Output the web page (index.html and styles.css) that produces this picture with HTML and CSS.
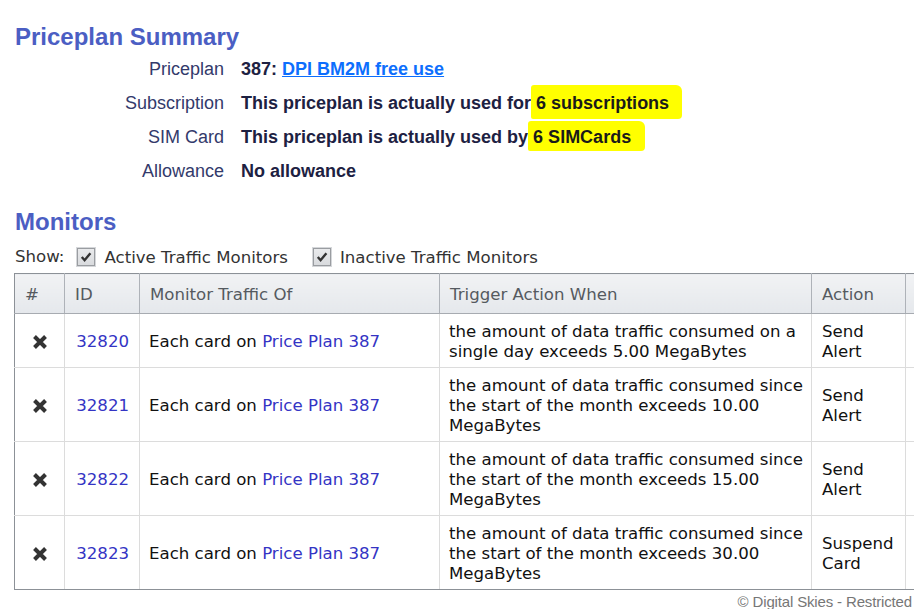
FILE: index.html
```html
<!DOCTYPE html>
<html>
<head>
<meta charset="utf-8">
<link rel="stylesheet" href="styles.css">
</head>
<body>
<div class="page">
  <h1 class="heading">Priceplan Summary</h1>
  <div class="summary">
    <div class="label">Priceplan</div>
    <div class="value">387: <a class="plan-link" href="#">DPI BM2M free use</a></div>
    <div class="label">Subscription</div>
    <div class="value">This priceplan is actually used for<span class="mark mark-sub"> 6 subscriptions</span></div>
    <div class="label">SIM Card</div>
    <div class="value">This priceplan is actually used by<span class="mark mark-sim"> 6 SIMCards</span></div>
    <div class="label">Allowance</div>
    <div class="value">No allowance</div>
  </div>

  <h2 class="heading heading-monitors">Monitors</h2>
  <div class="show-row">
    <span class="show-label">Show:</span>
    <label class="check-item"><span class="checkbox"><svg viewBox="0 0 12 12" width="12" height="12"><path d="M1.8 6 L4.6 9.2 L10.4 2.2" fill="none" stroke="#333" stroke-width="2.4"/></svg></span>Active Traffic Monitors</label>
    <label class="check-item"><span class="checkbox"><svg viewBox="0 0 12 12" width="12" height="12"><path d="M1.8 6 L4.6 9.2 L10.4 2.2" fill="none" stroke="#333" stroke-width="2.4"/></svg></span>Inactive Traffic Monitors</label>
  </div>

  <div class="table-wrap">
    <table class="monitors">
      <colgroup>
        <col class="c-num"><col class="c-id"><col class="c-of"><col class="c-when"><col class="c-action"><col class="c-extra">
      </colgroup>
      <thead>
        <tr><th>#</th><th>ID</th><th>Monitor Traffic Of</th><th>Trigger Action When</th><th>Action</th><th></th></tr>
      </thead>
      <tbody>
        <tr>
          <td class="del"><svg class="x-icon" viewBox="0 0 16 16" width="16" height="16"><path d="M2.5 2.5 L13.5 13.5 M13.5 2.5 L2.5 13.5" stroke="#333" stroke-width="4"/></svg></td>
          <td class="id"><a class="tlink" href="#">32820</a></td>
          <td class="of">Each card on <a class="tlink" href="#">Price Plan 387</a></td>
          <td class="when">the amount of data traffic consumed on a single day exceeds 5.00 MegaBytes</td>
          <td>Send Alert</td>
          <td></td>
        </tr>
        <tr>
          <td class="del"><svg class="x-icon" viewBox="0 0 16 16" width="16" height="16"><path d="M2.5 2.5 L13.5 13.5 M13.5 2.5 L2.5 13.5" stroke="#333" stroke-width="4"/></svg></td>
          <td class="id"><a class="tlink" href="#">32821</a></td>
          <td class="of">Each card on <a class="tlink" href="#">Price Plan 387</a></td>
          <td class="when">the amount of data traffic consumed since the start of the month exceeds 10.00 MegaBytes</td>
          <td>Send Alert</td>
          <td></td>
        </tr>
        <tr>
          <td class="del"><svg class="x-icon" viewBox="0 0 16 16" width="16" height="16"><path d="M2.5 2.5 L13.5 13.5 M13.5 2.5 L2.5 13.5" stroke="#333" stroke-width="4"/></svg></td>
          <td class="id"><a class="tlink" href="#">32822</a></td>
          <td class="of">Each card on <a class="tlink" href="#">Price Plan 387</a></td>
          <td class="when">the amount of data traffic consumed since the start of the month exceeds 15.00 MegaBytes</td>
          <td>Send Alert</td>
          <td></td>
        </tr>
        <tr>
          <td class="del"><svg class="x-icon" viewBox="0 0 16 16" width="16" height="16"><path d="M2.5 2.5 L13.5 13.5 M13.5 2.5 L2.5 13.5" stroke="#333" stroke-width="4"/></svg></td>
          <td class="id"><a class="tlink" href="#">32823</a></td>
          <td class="of">Each card on <a class="tlink" href="#">Price Plan 387</a></td>
          <td class="when">the amount of data traffic consumed since the start of the month exceeds 30.00 MegaBytes</td>
          <td>Suspend Card</td>
          <td></td>
        </tr>
      </tbody>
    </table>
  </div>
  <div class="footer">© Digital Skies - Restricted</div>
</div>
</body>
</html>
```

FILE: styles.css
```css
html, body {
  margin: 0;
  padding: 0;
  background: #ffffff;
}
.page {
  width: 914px;
  height: 609px;
  overflow: hidden;
  padding-top: 23px;
  box-sizing: border-box;
  font-family: "Liberation Sans", Arial, sans-serif;
}
.heading {
  margin: 0 0 0 15px;
  font-size: 24px;
  line-height: 28px;
  font-weight: bold;
  color: #4b5ec3;
}
.summary {
  display: grid;
  grid-template-columns: 209px auto;
  column-gap: 17px;
  grid-auto-rows: 34px;
  margin: 1px 0 0 15px;
  font-size: 18px;
  align-items: center;
}
.label {
  text-align: right;
  color: #333a6b;
}
.value {
  font-weight: bold;
  color: #1d2142;
}
.plan-link {
  color: #0d6efd;
  text-decoration: underline;
}
.mark {
  background: #ffff00;
  color: #1a1a1a;
  border-radius: 3px 6px 4px 2px;
}
.mark-sub {
  padding: 8px 13px 6px 0;
}
.mark-sim {
  padding: 6px 14px 4px 0;
}
.heading-monitors {
  margin-top: 20px;
}
.show-row {
  display: flex;
  align-items: center;
  height: 20px;
  margin: 11px 0 0 15px;
  font-family: "DejaVu Sans", Verdana, sans-serif;
  font-size: 16.6px;
  color: #333;
}
.show-label {
  margin-right: 12px;
  position: relative;
  top: -1px;
}
.check-item {
  display: flex;
  align-items: center;
  margin-right: 24px;
}
.checkbox {
  width: 16px;
  height: 16px;
  border: 1px solid #9a9da1;
  outline: 1px solid #d5d7da;
  background: linear-gradient(#e9eaec, #d9dbde);
  display: flex;
  align-items: center;
  justify-content: center;
  margin: 0 9px 0 1px;
}
.table-wrap {
  margin: 6px 0 0 14px;
  overflow: hidden;
  width: 900px;
}
.monitors {
  border-collapse: collapse;
  table-layout: fixed;
  width: 960px;
  font-family: "DejaVu Sans", Verdana, sans-serif;
  font-size: 16.6px;
  line-height: 20px;
  color: #111;
  border: 1px solid #8c9197;
}
.c-num { width: 50px; }
.c-id { width: 75px; }
.c-of { width: 300px; }
.c-when { width: 372px; }
.c-action { width: 94px; }
.c-extra { width: 69px; }
.monitors th {
  text-align: left;
  font-weight: normal;
  color: #555a60;
  padding: 11px 10px 8px;
  background: linear-gradient(#f1f2f4, #e5e8ec);
  border: 1px solid #aeb2b8;
  border-bottom: 1px solid #a7abb1;
  border-top: 1px solid #8c9197;
}
.monitors td {
  padding: 8px 10px 5px;
  border: 1px solid #dcdcdc;
  vertical-align: middle;
}
.monitors td.of {
  padding-left: 9px;
}
.monitors td.when {
  padding-left: 9px;
  padding-right: 3px;
}
.monitors tr > :first-child {
  border-left: 1px solid #8c9197;
}
.monitors tbody tr:last-child td {
  border-bottom: 1px solid #8c9197;
}
.monitors td.del {
  text-align: center;
}
.monitors td.id {
  text-align: right;
}
.x-icon {
  display: block;
  margin: 0 auto;
}
.tlink {
  color: #3434c4;
  text-decoration: none;
}
.footer {
  text-align: right;
  padding-right: 2px;
  margin-top: 3px;
  font-size: 15px;
  color: #767676;
  letter-spacing: -0.15px;
}
```
